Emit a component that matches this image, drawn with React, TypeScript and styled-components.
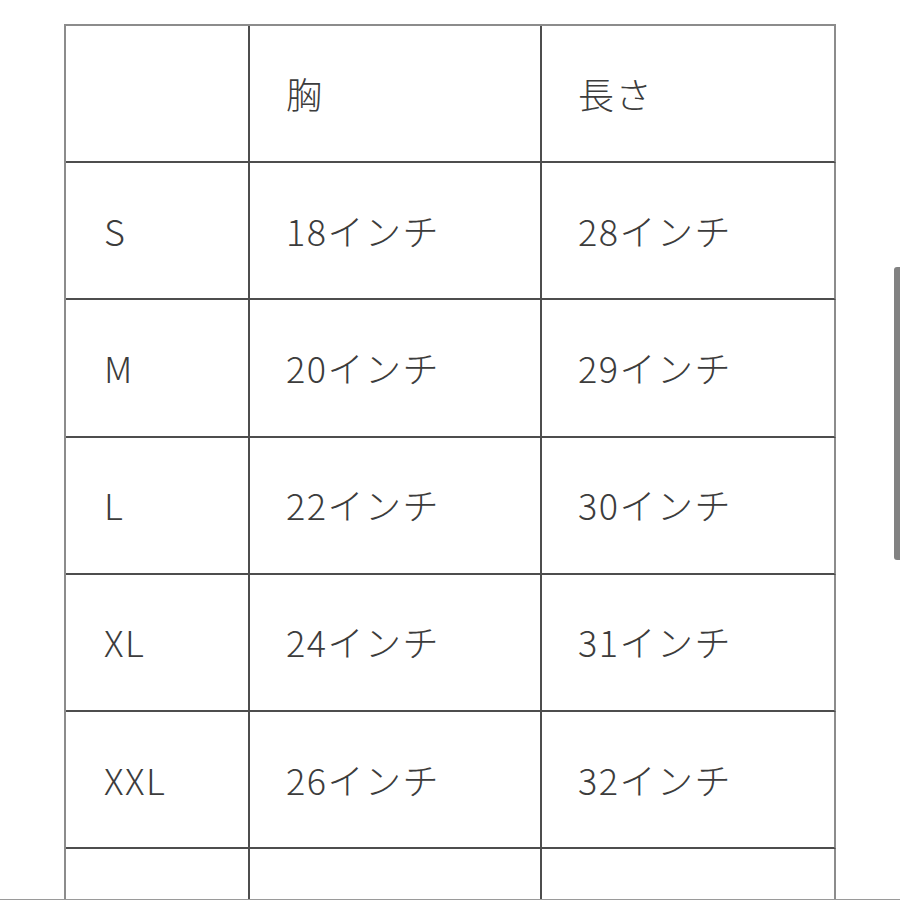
import React from "react";
import styled, { createGlobalStyle } from "styled-components";

const GlobalStyle = createGlobalStyle`
  html, body {
    margin: 0;
    padding: 0;
    background: #ffffff;
    overflow: hidden;
  }
  body {
    font-family: "Noto Sans CJK JP", "Noto Sans", sans-serif;
  }
`;

const rows: [string, string, string][] = [
  ["", "胸", "長さ"],
  ["S", "18インチ", "28インチ"],
  ["M", "20インチ", "29インチ"],
  ["L", "22インチ", "30インチ"],
  ["XL", "24インチ", "31インチ"],
  ["XXL", "26インチ", "32インチ"],
  ["", "", ""],
];

const App = () => {
  return (
    <>
      <GlobalStyle />
      <Page>
        <SizeTable>
          {rows.map((row, r) =>
            row.map((text, c) => (
              <Cell
                key={`${r}-${c}`}
                $first={c === 0}
                $last={c === row.length - 1}
              >
                {text}
              </Cell>
            ))
          )}
        </SizeTable>
      </Page>
      <ScrollThumb />
      <BottomEdge />
    </>
  );
};

export default App;

const Page = styled.div`
  height: 900px;
  padding: 24px 0 0 64px;
  box-sizing: border-box;
  overflow: hidden;
`;

const SizeTable = styled.div`
  display: grid;
  grid-template-columns: 184px 292px 294px;
  grid-auto-rows: 137.2px;
  width: max-content;
  border-top: 2px solid #8c8c8c;
  border-left: 2px solid #8c8c8c;
`;

const Cell = styled.div<{ $first: boolean; $last: boolean }>`
  box-sizing: border-box;
  display: flex;
  align-items: center;
  padding-left: ${(p) => (p.$first ? "38px" : "36px")};
  padding-bottom: 2px;
  border-bottom: 2px solid #4d4d4d;
  border-right: 2px solid ${(p) => (p.$last ? "#8c8c8c" : "#4d4d4d")};
  font-size: 36px;
  font-weight: 300;
  letter-spacing: 1.5px;
  color: #3c3c3c;
  white-space: nowrap;
`;

const ScrollThumb = styled.div`
  position: fixed;
  right: 0;
  top: 267px;
  width: 6px;
  height: 293px;
  border-radius: 3px 0 0 3px;
  background: #828282;
`;

const BottomEdge = styled.div`
  position: fixed;
  left: 0;
  right: 0;
  bottom: 0;
  height: 1px;
  background: #9a9a9a;
`;
